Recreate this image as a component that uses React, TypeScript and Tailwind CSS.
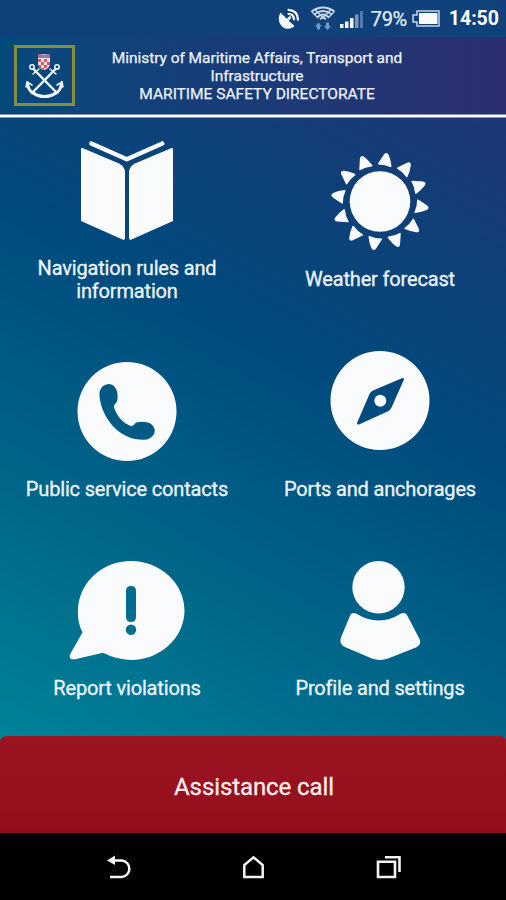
import type { ReactNode } from 'react';

interface MenuItem {
  label: string;
  icon: ReactNode;
  className: string;
  labelClass: string;
}

const BookIcon = () => (
  <svg width="100" height="99" viewBox="0 0 100 99" fill="#fafbfc">
    <path d="M14.500 2.500 50 18.300 85.500 2.500" transform="translate(-.2 0)" fill="none" stroke="#fafbfc" strokeWidth="4.300" strokeLinecap="round" strokeLinejoin="round" />
    <path d="M4 8.200Q4 6.400 6 7.200L42 22.500Q48 25.500 48 31.500V97Q48 99.400 45.500 98.500L4 80Z" />
    <path d="M96 8.200Q96 6.400 94 7.200L58 22.500Q52 25.500 52 31.500V97Q52 99.400 54.500 98.500L96 80Z" />
  </svg>
);

const rays = [8, 38, 68, 98, 128, 158, 188, 218, 248, 278, 308, 338];

const SunIcon = () => (
  <svg width="100" height="99" viewBox="0 0 100 99" fill="#fafbfc">
    <circle cx="50" cy="49.5" r="30.300" />
    {rays.map((angle) => (
      <path
        key={angle}
        transform={`translate(50 49.5) rotate(${angle})`}
        d="M-7-36.500Q-7.500-37-7-38L-2.500-47.300Q-.5-50.600 2-47.500Q4.800-43 6.500-36.500Q6.700-35.400 5.300-35.700Q-.5-37.500-7-36.500Z"
      />
    ))}
  </svg>
);

const PhoneIcon = () => (
  <svg width="100" height="99" viewBox="0 0 100 99" fill="#fafbfc">
    <path
      fillRule="evenodd"
      d="M50 0A49.500 49.500 0 1 1 50 99A49.500 49.500 0 1 1 50 0ZM31.500 22Q25 22.500 22.800 29C21.800 33 23 40 25.500 47C30.500 60.500 41 71.500 54 76C60 78 68 78 71 77.200Q78 74 77.800 68Q76.500 62 71 60.500Q64 58.800 59 60.500Q56.500 64 54.500 64.200C45 61 39 52.500 36.800 44.500Q37 43 40 39.500Q41.500 34 39.500 28Q37 21.800 31.500 22Z"
    />
  </svg>
);

const CompassIcon = () => (
  <svg width="100" height="99" viewBox="0 0 100 99" fill="#fafbfc">
    <path
      fillRule="evenodd"
      d="M50 0A49.500 49.500 0 1 1 50 99A49.500 49.500 0 1 1 50 0ZM72.500 27L43 39.500Q40.500 40.500 39.500 43L27 72Q26.800 74 29 73.500L57.500 60.500Q60.500 59 61.500 56.500L74 28.500Q74 26.500 72.500 27Z"
    />
    <circle cx="50.300" cy="49.800" r="6" />
  </svg>
);

const ReportIcon = () => (
  <svg width="116" height="99" viewBox="0 0 116 99" fill="#fafbfc">
    <path
      fillRule="evenodd"
      d="M62 0C91 0 115.500 22 115.500 49.500S91 99 62 99Q47 98.500 34 91.800L6 98.300Q-1 99 1.200 93L13.500 71.500C9.500 64 8.500 56 9 47C11 20 34 0 62 0ZM62 25Q57 25 57 30V56Q57 61 62 61T67 56V30Q67 25 62 25ZM62 63.500A5.200 5.200 0 1 0 62 73.900A5.200 5.200 0 1 0 62 63.500Z"
    />
  </svg>
);

const ProfileIcon = () => (
  <svg width="84" height="99" viewBox="0 0 84 99" fill="#fafbfc">
    <circle cx="40.500" cy="26.200" r="26.200" />
    <path d="M12.500 53.500Q14.500 51 18 52.500Q41 66.500 63 52.500Q67 51 69 54L81.500 78Q84 83.500 78 86.500L50 97.500Q42 100.300 34 97.500L8 86.500Q.5 83.500 3 76.500Z" />
  </svg>
);

const items: MenuItem[] = [
  { label: 'Navigation rules and information', icon: <BookIcon />, className: 'pt-[23px]', labelClass: 'mt-[17px] w-[201px]' },
  { label: 'Weather forecast', icon: <SunIcon />, className: 'pt-[34px]', labelClass: 'mt-[17px]' },
  { label: 'Public service contacts', icon: <PhoneIcon />, className: 'pt-[38px]', labelClass: 'mt-[17px]' },
  { label: 'Ports and anchorages', icon: <CompassIcon />, className: 'pt-[27px]', labelClass: 'mt-[28px]' },
  { label: 'Report violations', icon: <ReportIcon />, className: 'pt-[31px]', labelClass: 'mt-[17px]' },
  { label: 'Profile and settings', icon: <ProfileIcon />, className: 'pt-[31px]', labelClass: 'mt-[17px]' },
];

const StatusBar = () => (
  <div className="flex h-[37px] shrink-0 items-center justify-end bg-[#10417a] pr-[7px] text-[#e8eef6]">
    <svg className="mr-[10px]" width="22" height="22" viewBox="0 0 22 22" fill="none" stroke="#f4f7fb" strokeLinecap="round">
      <path d="M2.500 4.500C-.5 10 .5 16 5 19.200C9 22 14 20.800 16.500 18L10.500 12.500Z" fill="#f4f7fb" stroke="none" />
      <path d="M9 12.500 12 9.500" strokeWidth="2.500" />
      <path d="M10.500 5.800Q15.800 6 16 11.500M10.500 1.800Q19.700 2.300 20 11.800" strokeWidth="2.200" />
    </svg>
    <svg className="mr-[4px]" width="26" height="25" viewBox="0 0 26 25" fill="none" stroke="#c9d8ea" strokeWidth="1.900">
      <path d="M1.500 5.500Q13-2.500 24.500 5.500M4 8.500Q13 1.500 22 8.500M7 11.500Q13 5.500 19 11.500M10 13.500Q13 10 16 13.500" />
      <path d="M1.500 5.500 8 12M24.500 5.500 18 12M5 3.500 13 11.500 21 3.500" strokeWidth="1.300" />
      <path d="M8.500 19V23.500M17.500 16.500V21" stroke="#6f9dc0" strokeWidth="3" />
      <path d="M5 20.500 8.500 16.500 12 20.500ZM14 20H21L17.500 24Z" fill="#6f9dc0" stroke="none" />
    </svg>
    <svg className="mr-[7px]" width="24" height="18" viewBox="0 0 24 18" fill="#f4f7fb">
      <path d="M0 14H3.500V18H0ZM5 11.500H8.500V18H5ZM10 8H13.500V18H10Z" />
      <path d="M15 4.500H18.500V18H15Z" fill="#7895ba" />
      <path d="M20 1H23V18H20Z" fill="#5479a8" />
    </svg>
    <span className="text-[20px] leading-none tracking-[-0.4px] [-webkit-text-stroke:0.25px]">79%</span>
    <svg className="mr-[9px] ml-[5px]" width="28" height="17" viewBox="0 0 28 17">
      <path d="M5 1H27V16H5V12H1V5H5Z" fill="none" stroke="#c9d3e2" strokeWidth="1.500" />
      <path d="M7 3H25.500V14H7Z" fill="#fafbfc" />
    </svg>
    <span className="text-[19.500px] leading-none font-bold text-white">14:50</span>
  </div>
);

const Emblem = () => (
  <svg width="61" height="61" viewBox="0 0 61 61" fill="none">
    <rect x="1.500" y="1.500" width="58" height="58" stroke="#858d3e" strokeWidth="3" />
    <path d="M24 10Q30 8 36 10V19Q35 24 30 25Q25 24 24 19Z" fill="#f4dbe1" />
    <path d="M24 14h3v3h-3zM30 14h3v3h-3zM27 17h3v3h-3zM33 17h3v3h-3zM25 20h2v3h-2zM30 20h3v3h-3zM27 23h3v2h-3z" fill="#e0566b" />
    <path d="M24 9.500H36V13H24Z" fill="#8b7fb0" />
    <path d="M26 9v4M34 9v4" stroke="#e0566b" strokeWidth="1.500" />
    <g stroke="#f4f7fb" strokeLinecap="round">
      <circle cx="18" cy="22" r="2.200" strokeWidth="1.500" />
      <circle cx="43" cy="22" r="2.200" strokeWidth="1.500" />
      <path d="M19.500 24 43 48M41.500 24 18 48" strokeWidth="2.500" />
      <path d="M19 29 25 24M42 29 36 24" strokeWidth="1.500" />
      <path d="M13.500 38Q14 46 20 48.500Q25 52 32 51.500M47.500 38Q47 46 41 48.500Q36 52 29 51.500" strokeWidth="3" />
      <path d="M12 42 13 37 18 40M49 42 48 37 43 40" strokeWidth="1.500" />
    </g>
  </svg>
);

const Header = () => (
  <header className="flex h-[77px] shrink-0 items-start bg-linear-to-r from-[#03497b] via-[#193b77] to-[#2b2e70] pt-[8px] pl-[14px]">
    <Emblem />
    <div className="ml-[32px] w-[300px] pt-[4px] text-center text-[15.500px] leading-[18px] text-[#eef3f9] [-webkit-text-stroke:0.25px]">
      <p className="tracking-[-0.04px]">Ministry of Maritime Affairs, Transport and Infrastructure</p>
      <p>MARITIME SAFETY DIRECTORATE</p>
    </div>
  </header>
);

const NavigationBar = () => (
  <nav className="flex h-[67px] shrink-0 items-center bg-black text-[#f4f4f4]">
    <button className="ml-[107px]" aria-label="Back">
      <svg width="25" height="24" viewBox="0 0 25 24" fill="none" stroke="currentColor" strokeWidth="2.500">
        <path d="M6 5.500H15A8.300 8.300 0 0 1 15 22H3" />
        <path d="M0 5.500 8 .5V10Z" fill="currentColor" stroke="none" />
      </svg>
    </button>
    <button className="ml-[110px]" aria-label="Home">
      <svg width="23" height="24" viewBox="0 0 23 24" fill="none" stroke="currentColor" strokeWidth="2.500">
        <path d="M2.300 22V10L11.500 2.300 20.700 10V22Z" />
      </svg>
    </button>
    <button className="ml-[111px]" aria-label="Recent apps">
      <svg width="26" height="24" viewBox="0 0 26 24" fill="none" stroke="currentColor" strokeWidth="2.600">
        <path d="M2 6.800H19V22H2Z" />
        <path d="M9 2.300H23.500V17" />
      </svg>
    </button>
  </nav>
);

export default function App() {
  return (
    <div className="flex h-[900px] w-[506px] flex-col overflow-hidden bg-black font-['Roboto',sans-serif]">
      <div className="flex h-[833px] flex-col bg-[linear-gradient(28deg,#008499_8%,#00698b_30%,#004a7d_58%,#113f78_76%,#223474_94%)]">
        <StatusBar />
        <Header />
        <div className="h-[4px] shrink-0 border-y border-[#8196bc] bg-white" />
        <main className="grid h-[618px] shrink-0 grid-cols-2 grid-rows-3">
          {items.map((item) => (
            <button key={item.label} className={`flex flex-col items-center justify-start ${item.className}`}>
              {item.icon}
              <span className={`pl-px text-center text-[20px] leading-[23px] tracking-[-0.17px] text-[#eef4f9] [-webkit-text-stroke:0.3px] ${item.labelClass}`}>
                {item.label}
              </span>
            </button>
          ))}
        </main>
        <button className="h-[97px] shrink-0 rounded-t-[6px] bg-linear-to-b from-[#9b1422] to-[#930d1b] pt-[4px] pl-[2px] text-[24px] tracking-[-0.1px] text-[#fbeeee] [-webkit-text-stroke:0.3px]">
          Assistance call
        </button>
      </div>
      <NavigationBar />
    </div>
  );
}
